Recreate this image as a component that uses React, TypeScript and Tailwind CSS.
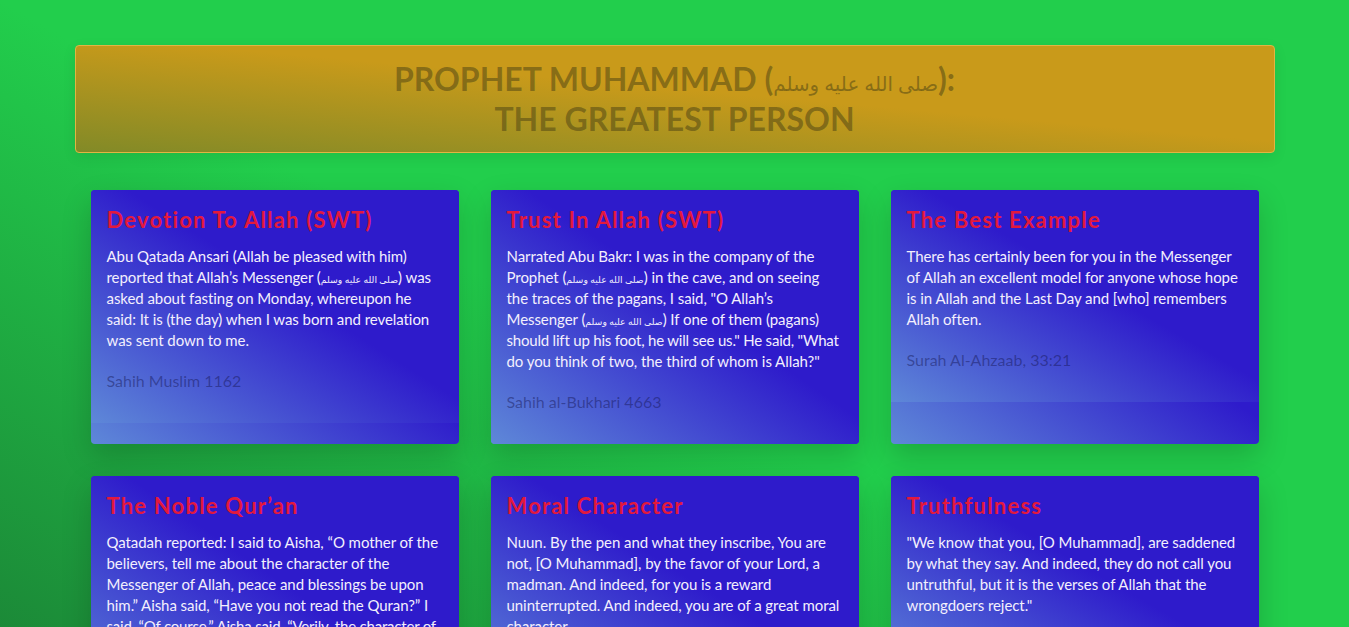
import type { ReactNode } from "react";

// salutation, kept small so it sits inside the Latin line like the original
function Pbuh() {
  return <span className="text-[0.62em] font-normal leading-none">صلى الله عليه وسلم</span>;
}

const cards: { title: string; text: ReactNode; source: string }[] = [
  {
    title: "Devotion To Allah (SWT)",
    text: (
      <>
        Abu Qatada Ansari (Allah be pleased with him) reported that Allah’s Messenger (<Pbuh />) was asked about
        fasting on Monday, whereupon he said: It is (the day) when I was born and revelation was sent down to me.
      </>
    ),
    source: "Sahih Muslim 1162",
  },
  {
    title: "Trust In Allah (SWT)",
    text: (
      <>
        Narrated Abu Bakr: I was in the company of the Prophet (<Pbuh />) in the cave, and on seeing the traces of
        the pagans, I said, "O Allah’s Messenger (<Pbuh />) If one of them (pagans){" "}
        <span className="tracking-[-0.2px]">should lift up his foot, he will see us." He said, "What</span> do you
        think of two, the third of whom is Allah?"
      </>
    ),
    source: "Sahih al-Bukhari 4663",
  },
  {
    title: "The Best Example",
    text: "There has certainly been for you in the Messenger of Allah an excellent model for anyone whose hope is in Allah and the Last Day and [who] remembers Allah often.",
    source: "Surah Al-Ahzaab, 33:21",
  },
  {
    title: "The Noble Qur’an",
    text: (
      <>
        Qatadah reported: I said to Aisha, “O mother of the believers, tell me about the character of the Messenger
        of Allah, peace and blessings be upon him.” Aisha said, “Have you not read the Quran?” I{" "}
        <span className="tracking-[-0.2px]">said, “Of course.” Aisha said, “Verily, the character of</span> the
        Prophet of Allah was the Quran.”
      </>
    ),
    source: "Sahih Muslim 746",
  },
  {
    title: "Moral Character",
    text: "Nuun. By the pen and what they inscribe, You are not, [O Muhammad], by the favor of your Lord, a madman. And indeed, for you is a reward uninterrupted. And indeed, you are of a great moral character.",
    source: "Surah Al-Qalam, 68:1-4",
  },
  {
    title: "Truthfulness",
    text: "\"We know that you, [O Muhammad], are saddened by what they say. And indeed, they do not call you untruthful, but it is the verses of Allah that the wrongdoers reject.\"",
    source: "Surah Al-An’am, 6:33",
  },
];

function Card({ title, text, source }: { title: string; text: ReactNode; source: string }) {
  return (
    <div className="flex flex-col rounded-[4px] overflow-hidden shadow-[0_12px_30px_rgba(0,0,0,0.18)] bg-[linear-gradient(to_top_right,#5e88d8_0%,#2e1bcb_55%)]">
      <div className="px-4 pt-4 pb-7 bg-[linear-gradient(to_top_right,#5e88d8_0%,#2e1bcb_55%)]">
        <h2 className="text-[22px] leading-7 font-bold tracking-[1.2px] text-[#e3193d] mb-3">{title}</h2>
        <p className="text-[15px] leading-[21px] tracking-[-0.06px] text-[#f3effd] mb-4">{text}</p>
        <p className="text-base leading-7 text-[rgba(20,20,80,0.45)]">{source}</p>
      </div>
    </div>
  );
}

export default function App() {
  return (
    <div className="min-h-screen pt-[45px] pb-10 bg-[linear-gradient(to_top_right,#1a7a33_0%,#22ce4c_50%)] font-['Lato','DejaVu_Sans',sans-serif]">
      <div className="max-w-[1200px] mx-auto">
        <header className="rounded-[4px] border border-[#e2b442] bg-[linear-gradient(to_top_right,#828a27_0%,#c99a1a_55%)] py-[13px] text-center shadow-[0_4px_14px_rgba(0,0,0,0.08)]">
          <h1 className="text-[32px] leading-10 font-bold uppercase text-[rgba(80,70,20,0.55)]">
            Prophet Muhammad (<Pbuh />):
            <br />
            The Greatest Person
          </h1>
        </header>
        <div className="grid grid-cols-3 gap-8 px-4 mt-[37px]">
          {cards.map((c) => (
            <Card key={c.title} {...c} />
          ))}
        </div>
      </div>
    </div>
  );
}
